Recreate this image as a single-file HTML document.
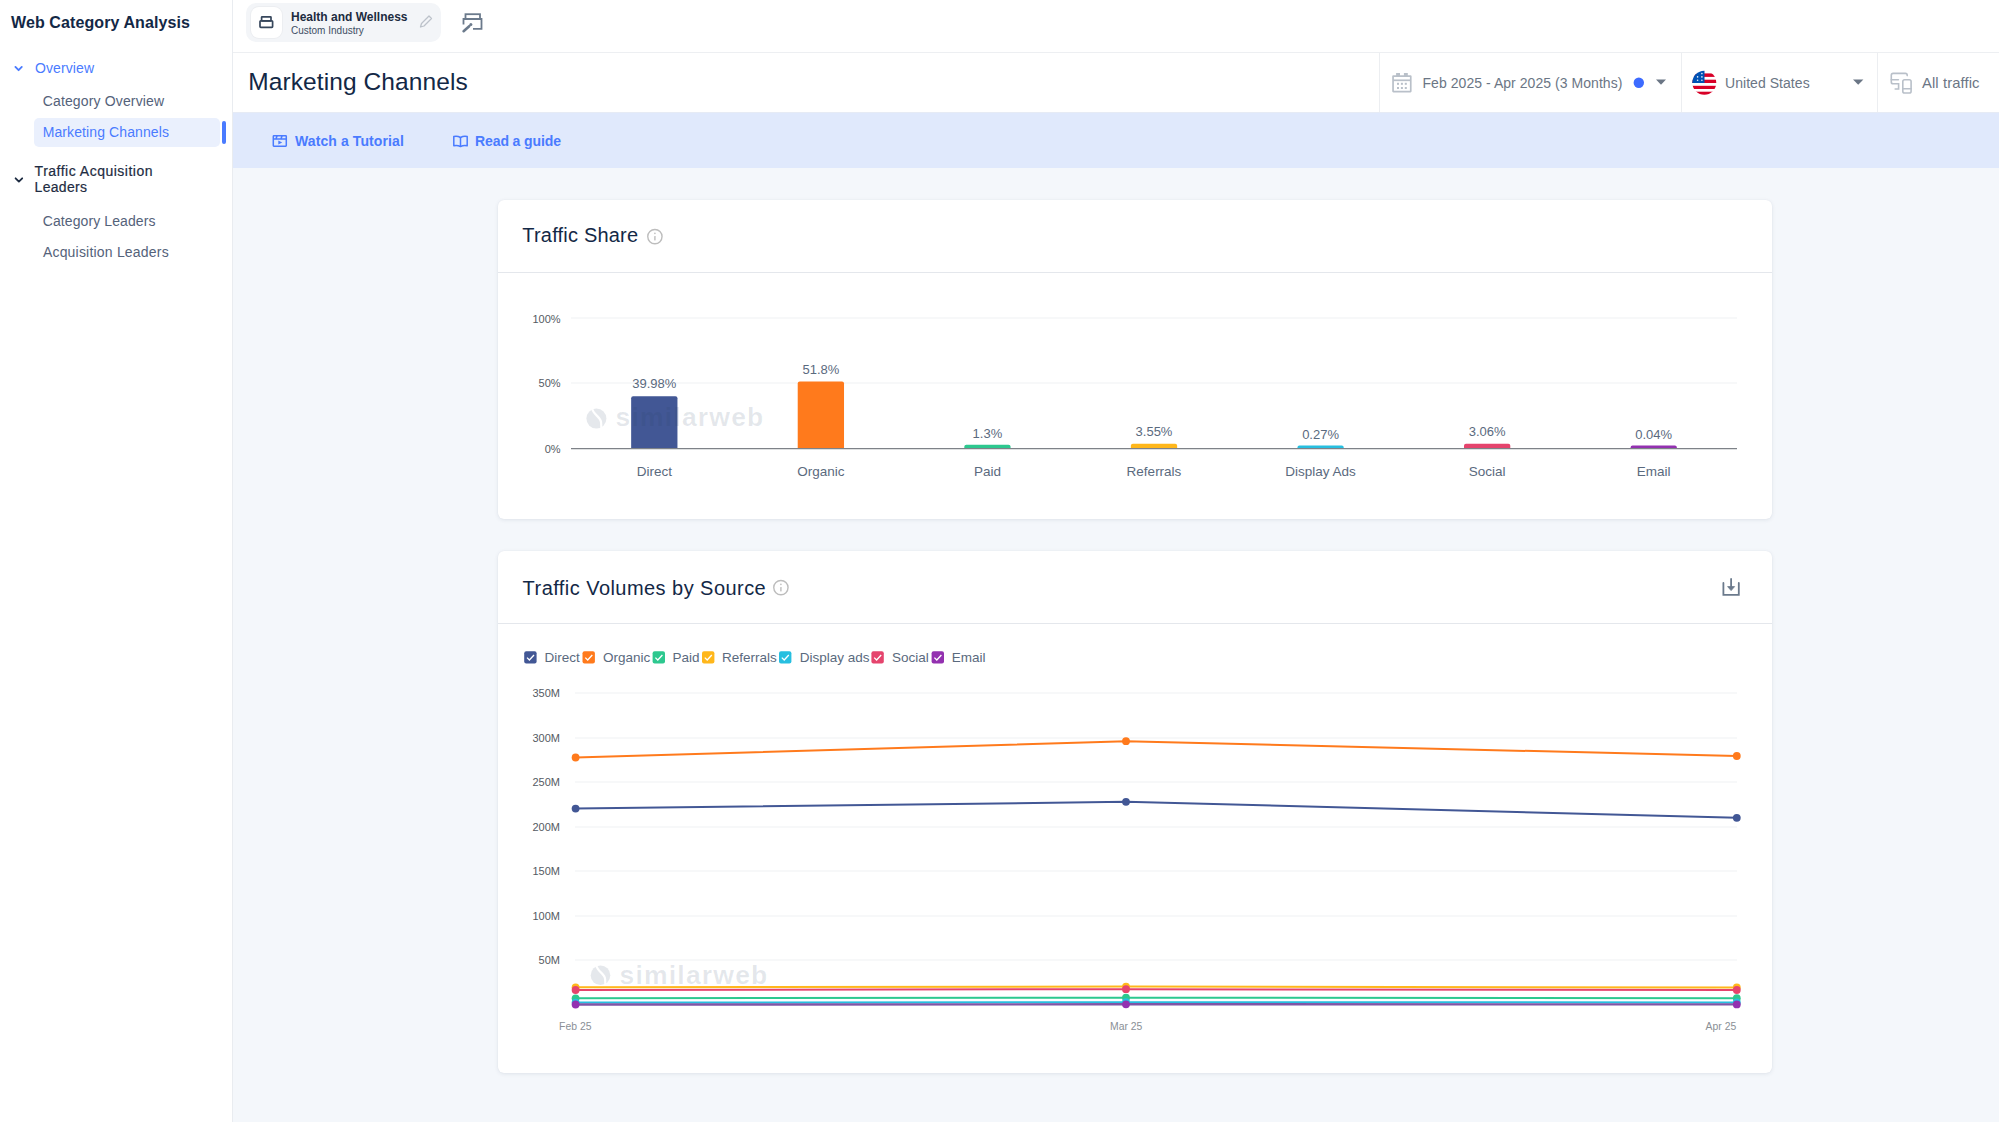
<!DOCTYPE html>
<html><head><meta charset="utf-8"><title>Marketing Channels</title>
<style>
html,body{margin:0;padding:0;width:1999px;height:1122px;overflow:hidden;background:#F4F7FB;}
body{position:relative;font-family:"Liberation Sans", sans-serif;}
.t{position:absolute;white-space:nowrap;}
svg{position:absolute;left:0;top:0;}
</style></head><body>
<div style="position:absolute;left:0px;top:0px;width:1999px;height:1122px;background:#F4F7FB;"></div>
<div style="position:absolute;left:0px;top:0px;width:232px;height:1122px;background:#FFFFFF;"></div>
<div style="position:absolute;left:232px;top:0px;width:1px;height:1122px;background:#E9ECF0;"></div>
<div style="position:absolute;left:233px;top:0px;width:1766px;height:52px;background:#FFFFFF;"></div>
<div style="position:absolute;left:233px;top:52px;width:1766px;height:1px;background:#EDEFF2;"></div>
<div style="position:absolute;left:233px;top:53px;width:1766px;height:59px;background:#FFFFFF;"></div>
<div style="position:absolute;left:233px;top:112px;width:1766px;height:56px;background:#E0E9FC;"></div>
<div style="position:absolute;left:233px;top:112px;width:1766px;height:1px;background:#E6EBF5;"></div>
<div class="t" style="left:11.00px;top:15.46px;font-size:16px;line-height:16px;color:#132846;font-weight:700;letter-spacing:0.1px;">Web Category Analysis</div>
<div class="t" style="left:35.00px;top:61.15px;font-size:14px;line-height:14px;color:#4A7BFF;font-weight:400;letter-spacing:0.1px;">Overview</div>
<div class="t" style="left:42.70px;top:93.95px;font-size:14px;line-height:14px;color:#54627A;font-weight:400;letter-spacing:0.15px;">Category Overview</div>
<div style="position:absolute;left:34px;top:118px;width:186px;height:29px;background:#EAF0FD;border-radius:5px;"></div>
<div style="position:absolute;left:222px;top:121px;width:4px;height:23px;background:#4A7BFF;border-radius:2px;"></div>
<div class="t" style="left:42.70px;top:125.15px;font-size:14px;line-height:14px;color:#4A7BFF;font-weight:400;letter-spacing:0.1px;">Marketing Channels</div>
<div class="t" style="left:34.60px;top:163.95px;font-size:14px;line-height:14px;color:#1E2C42;font-weight:400;letter-spacing:0.5px;-webkit-text-stroke:0.2px #1E2C42;">Traffic Acquisition</div>
<div class="t" style="left:34.60px;top:179.65px;font-size:14px;line-height:14px;color:#1E2C42;font-weight:400;letter-spacing:0.3px;-webkit-text-stroke:0.2px #1E2C42;">Leaders</div>
<div class="t" style="left:42.70px;top:213.55px;font-size:14px;line-height:14px;color:#54627A;font-weight:400;letter-spacing:0.1px;">Category Leaders</div>
<div class="t" style="left:42.90px;top:244.75px;font-size:14px;line-height:14px;color:#54627A;font-weight:400;letter-spacing:0.2px;">Acquisition Leaders</div>
<div style="position:absolute;left:246px;top:3px;width:195px;height:39px;background:#F3F5F8;border-radius:10px;"></div>
<div style="position:absolute;left:251px;top:7px;width:31px;height:31px;background:#FFFFFF;border-radius:8px;box-shadow:0 0 0 1px #ECEEF1;"></div>
<div class="t" style="left:291.00px;top:10.84px;font-size:12px;line-height:12px;color:#1C2B40;font-weight:700;">Health and Wellness</div>
<div class="t" style="left:291.00px;top:26.04px;font-size:10px;line-height:10px;color:#3D4D63;font-weight:400;">Custom Industry</div>
<div class="t" style="left:248.20px;top:69.76px;font-size:24.5px;line-height:24.5px;color:#132846;font-weight:400;letter-spacing:0.1px;">Marketing Channels</div>
<div style="position:absolute;left:1378.5px;top:53px;width:1.0px;height:59px;background:#ECEEF1;"></div>
<div style="position:absolute;left:1680.5px;top:53px;width:1.0px;height:59px;background:#ECEEF1;"></div>
<div style="position:absolute;left:1877px;top:53px;width:1px;height:59px;background:#ECEEF1;"></div>
<div class="t" style="left:1422.50px;top:76.25px;font-size:14px;line-height:14px;color:#6B7685;font-weight:400;letter-spacing:0.05px;">Feb 2025 - Apr 2025 (3 Months)</div>
<div class="t" style="left:1725.00px;top:76.25px;font-size:14px;line-height:14px;color:#6B7685;font-weight:400;letter-spacing:0.05px;">United States</div>
<div class="t" style="left:1922.00px;top:75.57px;font-size:14.8px;line-height:14.8px;color:#6B7685;font-weight:400;letter-spacing:0.1px;">All traffic</div>
<div class="t" style="left:295.00px;top:134.15px;font-size:14px;line-height:14px;color:#4A7BFF;font-weight:700;letter-spacing:0.1px;">Watch a Tutorial</div>
<div class="t" style="left:475.00px;top:134.15px;font-size:14px;line-height:14px;color:#4A7BFF;font-weight:700;letter-spacing:-0.1px;">Read a guide</div>
<div style="position:absolute;left:498px;top:200px;width:1274px;height:319px;background:#FFFFFF;border-radius:6px;box-shadow:0 1px 4px rgba(20,40,80,0.09), 0 0 1px rgba(20,40,80,0.08);"></div>
<div style="position:absolute;left:498px;top:551px;width:1274px;height:522px;background:#FFFFFF;border-radius:6px;box-shadow:0 1px 4px rgba(20,40,80,0.09), 0 0 1px rgba(20,40,80,0.08);"></div>
<div style="position:absolute;left:498px;top:272px;width:1274px;height:1px;background:#E4E7EC;"></div>
<div style="position:absolute;left:498px;top:623px;width:1274px;height:1px;background:#E4E7EC;"></div>
<div class="t" style="left:522.30px;top:225.07px;font-size:20px;line-height:20px;color:#132846;font-weight:400;letter-spacing:0.2px;">Traffic Share</div>
<div class="t" style="left:522.60px;top:577.97px;font-size:20px;line-height:20px;color:#132846;font-weight:400;letter-spacing:0.45px;">Traffic Volumes by Source</div>
<div style="position:absolute;left:571px;top:316.5px;width:1166px;height:2.0px;background:#F7F8F9;"></div>
<div style="position:absolute;left:571px;top:381.5px;width:1166px;height:2.0px;background:#F7F8F9;"></div>
<div class="t" style="right:1438.40px;top:313.59px;font-size:11px;line-height:11px;color:#555B63;font-weight:400;">100%</div>
<div class="t" style="right:1438.40px;top:378.39px;font-size:11px;line-height:11px;color:#555B63;font-weight:400;">50%</div>
<div class="t" style="right:1438.40px;top:443.89px;font-size:11px;line-height:11px;color:#555B63;font-weight:400;">0%</div>
<div class="t" style="left:354.30px;width:600px;text-align:center;top:377.40px;font-size:13px;line-height:13px;color:#5A6A7E;font-weight:400;">39.98%</div>
<div class="t" style="left:354.30px;width:600px;text-align:center;top:464.67px;font-size:13.5px;line-height:13.5px;color:#5A6A7E;font-weight:400;">Direct</div>
<div class="t" style="left:520.87px;width:600px;text-align:center;top:362.60px;font-size:13px;line-height:13px;color:#5A6A7E;font-weight:400;">51.8%</div>
<div class="t" style="left:520.87px;width:600px;text-align:center;top:464.67px;font-size:13.5px;line-height:13.5px;color:#5A6A7E;font-weight:400;">Organic</div>
<div class="t" style="left:687.44px;width:600px;text-align:center;top:426.80px;font-size:13px;line-height:13px;color:#5A6A7E;font-weight:400;">1.3%</div>
<div class="t" style="left:687.44px;width:600px;text-align:center;top:464.67px;font-size:13.5px;line-height:13.5px;color:#5A6A7E;font-weight:400;">Paid</div>
<div class="t" style="left:854.01px;width:600px;text-align:center;top:424.80px;font-size:13px;line-height:13px;color:#5A6A7E;font-weight:400;">3.55%</div>
<div class="t" style="left:854.01px;width:600px;text-align:center;top:464.67px;font-size:13.5px;line-height:13.5px;color:#5A6A7E;font-weight:400;">Referrals</div>
<div class="t" style="left:1020.58px;width:600px;text-align:center;top:427.50px;font-size:13px;line-height:13px;color:#5A6A7E;font-weight:400;">0.27%</div>
<div class="t" style="left:1020.58px;width:600px;text-align:center;top:464.67px;font-size:13.5px;line-height:13.5px;color:#5A6A7E;font-weight:400;">Display Ads</div>
<div class="t" style="left:1187.15px;width:600px;text-align:center;top:424.80px;font-size:13px;line-height:13px;color:#5A6A7E;font-weight:400;">3.06%</div>
<div class="t" style="left:1187.15px;width:600px;text-align:center;top:464.67px;font-size:13.5px;line-height:13.5px;color:#5A6A7E;font-weight:400;">Social</div>
<div class="t" style="left:1353.72px;width:600px;text-align:center;top:427.50px;font-size:13px;line-height:13px;color:#5A6A7E;font-weight:400;">0.04%</div>
<div class="t" style="left:1353.72px;width:600px;text-align:center;top:464.67px;font-size:13.5px;line-height:13.5px;color:#5A6A7E;font-weight:400;">Email</div>
<div class="t" style="left:544.50px;top:651.17px;font-size:13.5px;line-height:13.5px;color:#5A6A7E;font-weight:400;">Direct</div>
<div class="t" style="left:603.00px;top:651.17px;font-size:13.5px;line-height:13.5px;color:#5A6A7E;font-weight:400;">Organic</div>
<div class="t" style="left:672.50px;top:651.17px;font-size:13.5px;line-height:13.5px;color:#5A6A7E;font-weight:400;">Paid</div>
<div class="t" style="left:722.00px;top:651.17px;font-size:13.5px;line-height:13.5px;color:#5A6A7E;font-weight:400;">Referrals</div>
<div class="t" style="left:799.70px;top:651.17px;font-size:13.5px;line-height:13.5px;color:#5A6A7E;font-weight:400;">Display ads</div>
<div class="t" style="left:892.00px;top:651.17px;font-size:13.5px;line-height:13.5px;color:#5A6A7E;font-weight:400;">Social</div>
<div class="t" style="left:951.70px;top:651.17px;font-size:13.5px;line-height:13.5px;color:#5A6A7E;font-weight:400;">Email</div>
<div style="position:absolute;left:575px;top:692.4px;width:1162px;height:2.0px;background:#F7F8F9;"></div>
<div class="t" style="right:1439.00px;top:688.39px;font-size:11px;line-height:11px;color:#555B63;font-weight:400;">350M</div>
<div style="position:absolute;left:575px;top:736.87px;width:1162px;height:2.0px;background:#F7F8F9;"></div>
<div class="t" style="right:1439.00px;top:732.86px;font-size:11px;line-height:11px;color:#555B63;font-weight:400;">300M</div>
<div style="position:absolute;left:575px;top:781.3399999999999px;width:1162px;height:2.0px;background:#F7F8F9;"></div>
<div class="t" style="right:1439.00px;top:777.33px;font-size:11px;line-height:11px;color:#555B63;font-weight:400;">250M</div>
<div style="position:absolute;left:575px;top:825.81px;width:1162px;height:2.0px;background:#F7F8F9;"></div>
<div class="t" style="right:1439.00px;top:821.80px;font-size:11px;line-height:11px;color:#555B63;font-weight:400;">200M</div>
<div style="position:absolute;left:575px;top:870.28px;width:1162px;height:2.0px;background:#F7F8F9;"></div>
<div class="t" style="right:1439.00px;top:866.27px;font-size:11px;line-height:11px;color:#555B63;font-weight:400;">150M</div>
<div style="position:absolute;left:575px;top:914.75px;width:1162px;height:2.0px;background:#F7F8F9;"></div>
<div class="t" style="right:1439.00px;top:910.74px;font-size:11px;line-height:11px;color:#555B63;font-weight:400;">100M</div>
<div style="position:absolute;left:575px;top:959.22px;width:1162px;height:2.0px;background:#F7F8F9;"></div>
<div class="t" style="right:1439.00px;top:955.21px;font-size:11px;line-height:11px;color:#555B63;font-weight:400;">50M</div>
<div class="t" style="left:275.30px;width:600px;text-align:center;top:1021.80px;font-size:10.4px;line-height:10.4px;color:#8A8F96;font-weight:400;">Feb 25</div>
<div class="t" style="left:826.20px;width:600px;text-align:center;top:1021.90px;font-size:10.4px;line-height:10.4px;color:#8A8F96;font-weight:400;">Mar 25</div>
<div class="t" style="right:262.80px;top:1021.90px;font-size:10.4px;line-height:10.4px;color:#8A8F96;font-weight:400;">Apr 25</div>
<svg width="1999" height="1122" viewBox="0 0 1999 1122">
<polyline points="15.4,66.9 18.6,70.2 21.8,66.9" fill="none" stroke="#4A7BFF" stroke-width="1.8" stroke-linecap="round" stroke-linejoin="round"/>
<polyline points="15.6,178.3 18.9,181.6 22.2,178.3" fill="none" stroke="#1E2C42" stroke-width="1.8" stroke-linecap="round" stroke-linejoin="round"/>
<g fill="none" stroke="#37475C" stroke-width="1.7"><rect x="260" y="20.8" width="12.6" height="6.6" rx="0.8"/><rect x="261.6" y="16.8" width="9.4" height="4" rx="0.5"/></g>
<g transform="translate(419.5,14.5)"><path d="M1,12.5 L2,9 L9.5,1.5 L12,4 L4.5,11.5 Z" fill="none" stroke="#BCC2CA" stroke-width="1.3" stroke-linejoin="round"/></g>
<g fill="none" stroke="#6B7A8C" stroke-width="1.8"><rect x="465.5" y="14.2" width="14.5" height="4.8"/><path d="M463.5,24.5 V19 H481.5 V28.8 H473"/></g><path d="M463.6,31.2 L469.2,26.2" stroke="#6B7A8C" stroke-width="2.6" stroke-linecap="round"/><circle cx="470.9" cy="24.4" r="1.5" fill="#6B7A8C"/>
<g fill="none" stroke="#B9C0C9" stroke-width="1.7"><rect x="1393.05" y="76.05" width="17.7" height="15.6" rx="0.3"/><line x1="1393" y1="80.3" x2="1410.7" y2="80.3"/></g><g fill="#B9C0C9"><rect x="1396.1" y="73" width="3.9" height="3"/><rect x="1403.9" y="73" width="3.9" height="3"/><rect x="1397" y="82.8" width="2" height="2"/><rect x="1400.9" y="82.8" width="2" height="2"/><rect x="1404.8" y="82.8" width="2" height="2"/><rect x="1397" y="87" width="2" height="2"/><rect x="1400.9" y="87" width="2" height="2"/><rect x="1404.8" y="87" width="2" height="2"/></g>
<circle cx="1638.8" cy="82.8" r="5.2" fill="#3D6BFF"/>
<path d="M1656,79.6 L1666,79.6 L1661,84.8 Z" fill="#6B7685"/>
<defs><clipPath id="fc"><circle cx="1704.3" cy="82.85" r="12"/></clipPath></defs>
<g clip-path="url(#fc)"><rect x="1692" y="70" width="25" height="26" fill="#FFFFFF"/>
<rect x="1692" y="73.4" width="25" height="3.5" fill="#D80027"/><rect x="1692" y="79.7" width="25" height="3.3" fill="#D80027"/><rect x="1692" y="85.8" width="25" height="3.2" fill="#D80027"/><rect x="1692" y="91.7" width="25" height="4" fill="#D80027"/>
<rect x="1692" y="70" width="12.5" height="13" fill="#0052B4"/></g>
<g fill="#EEF3FA"><circle cx="1701.9" cy="73.6" r="0.8"/><circle cx="1697.6" cy="76.9" r="0.8"/><circle cx="1701.9" cy="76.9" r="0.8"/><circle cx="1697.6" cy="80.3" r="0.8"/><circle cx="1701.9" cy="80.3" r="0.8"/></g>
<path d="M1853,79.6 L1863.4,79.6 L1858.2,84.8 Z" fill="#6B7685"/>
<g fill="none" stroke="#B9C0C9" stroke-width="1.6" stroke-linecap="round"><path d="M1907.2,75.6 V75.2 Q1907.2,73.4 1905.4,73.4 H1893.1 Q1891.3,73.4 1891.3,75.2 V82 Q1891.3,83.8 1893.1,83.8 H1898.6 V89 H1895.2"/><path d="M1891.3,79.7 H1898.4"/><rect x="1902.8" y="79.8" width="8.3" height="13.2" rx="1.8"/><path d="M1902.8,88.8 H1911.1"/></g>
<g fill="none" stroke="#4A7BFF" stroke-width="1.5"><rect x="273.3" y="135.8" width="13" height="10.4" rx="0.6"/><line x1="273.3" y1="139" x2="286.3" y2="139"/><line x1="277" y1="135.8" x2="276" y2="139"/><line x1="282" y1="135.8" x2="281" y2="139"/></g><path d="M278.3,140.6 L282.2,142.6 L278.3,144.6 Z" fill="#4A7BFF"/>
<g fill="none" stroke="#4A7BFF" stroke-width="1.5" stroke-linejoin="round"><path d="M460.5,137.5 C458,136 455.5,136 453.8,136.5 V145.8 C455.5,145.3 458,145.3 460.5,146.5 C463,145.3 465.5,145.3 467.2,145.8 V136.5 C465.5,136 463,136 460.5,137.5 Z"/><line x1="460.5" y1="137.5" x2="460.5" y2="146.5"/></g>
<g><circle cx="654.9" cy="236.6" r="7.15" fill="none" stroke="#BDBDBD" stroke-width="1.4"/><rect x="654.20" y="236.00" width="1.4" height="4.4" rx="0.4" fill="#BDBDBD"/><circle cx="654.9" cy="233.40" r="0.8" fill="#BDBDBD"/></g>
<g><circle cx="780.9" cy="587.6" r="7.15" fill="none" stroke="#BDBDBD" stroke-width="1.4"/><rect x="780.20" y="587.00" width="1.4" height="4.4" rx="0.4" fill="#BDBDBD"/><circle cx="780.9" cy="584.40" r="0.8" fill="#BDBDBD"/></g>
<g fill="none" stroke="#6B7A8C" stroke-width="1.8" stroke-linecap="round"><path d="M1723.4,583 V594.9 H1738.8 V583"/><path d="M1731.1,579 V588"/></g><path d="M1727.6,586.6 L1734.6,586.6 L1731.1,590.6 Z" fill="#6B7A8C" stroke="#6B7A8C" stroke-width="0.8" stroke-linejoin="round"/>
<line x1="571" y1="448.6" x2="1737" y2="448.6" stroke="#7E8288" stroke-width="1.3"/>
<path d="M631.15,448 V398.20 Q631.15,396.20 633.15,396.20 H675.45 Q677.45,396.20 677.45,398.20 V448 Z" fill="#425795"/>
<path d="M797.72,448 V383.40 Q797.72,381.40 799.72,381.40 H842.02 Q844.02,381.40 844.02,383.40 V448 Z" fill="#FF7A1C"/>
<path d="M964.29,448 V446.80 Q964.29,444.80 966.29,444.80 H1008.59 Q1010.59,444.80 1010.59,446.80 V448 Z" fill="#2DC88F"/>
<path d="M1130.86,448 V445.70 Q1130.86,443.70 1132.86,443.70 H1175.16 Q1177.16,443.70 1177.16,445.70 V448 Z" fill="#FFB71B"/>
<path d="M1297.43,448 V447.40 Q1297.43,445.40 1299.43,445.40 H1341.73 Q1343.73,445.40 1343.73,447.40 V448 Z" fill="#27BFE0"/>
<path d="M1464.00,448 V445.70 Q1464.00,443.70 1466.00,443.70 H1508.30 Q1510.30,443.70 1510.30,445.70 V448 Z" fill="#E5446D"/>
<path d="M1630.57,448 V447.40 Q1630.57,445.40 1632.57,445.40 H1674.87 Q1676.87,445.40 1676.87,447.40 V448 Z" fill="#9331B0"/>
<rect x="524.2" y="651.2" width="12.4" height="12.4" rx="2" fill="#425795"/><polyline points="527.0,657.6 529.4,660 534.0,655" fill="none" stroke="#FFFFFF" stroke-width="1.3"/>
<rect x="582.5" y="651.2" width="12.4" height="12.4" rx="2" fill="#FF7A1C"/><polyline points="585.3,657.6 587.7,660 592.3,655" fill="none" stroke="#FFFFFF" stroke-width="1.3"/>
<rect x="652.6" y="651.2" width="12.4" height="12.4" rx="2" fill="#2DC88F"/><polyline points="655.4,657.6 657.8,660 662.4,655" fill="none" stroke="#FFFFFF" stroke-width="1.3"/>
<rect x="702.0" y="651.2" width="12.4" height="12.4" rx="2" fill="#FFB71B"/><polyline points="704.8,657.6 707.2,660 711.8,655" fill="none" stroke="#FFFFFF" stroke-width="1.3"/>
<rect x="779.0" y="651.2" width="12.4" height="12.4" rx="2" fill="#27BFE0"/><polyline points="781.8,657.6 784.2,660 788.8,655" fill="none" stroke="#FFFFFF" stroke-width="1.3"/>
<rect x="871.4" y="651.2" width="12.4" height="12.4" rx="2" fill="#E5446D"/><polyline points="874.2,657.6 876.6,660 881.2,655" fill="none" stroke="#FFFFFF" stroke-width="1.3"/>
<rect x="931.6" y="651.2" width="12.4" height="12.4" rx="2" fill="#9331B0"/><polyline points="934.4,657.6 936.8,660 941.4,655" fill="none" stroke="#FFFFFF" stroke-width="1.3"/>
<polyline points="575.6,808.6 1126,801.8 1736.8,817.8" fill="none" stroke="#425795" stroke-width="2"/>
<circle cx="575.6" cy="808.6" r="3.9" fill="#425795"/>
<circle cx="1126" cy="801.8" r="3.9" fill="#425795"/>
<circle cx="1736.8" cy="817.8" r="3.9" fill="#425795"/>
<polyline points="575.6,757.5 1126,741.2 1736.8,756" fill="none" stroke="#FF7A1C" stroke-width="2"/>
<circle cx="575.6" cy="757.5" r="3.9" fill="#FF7A1C"/>
<circle cx="1126" cy="741.2" r="3.9" fill="#FF7A1C"/>
<circle cx="1736.8" cy="756" r="3.9" fill="#FF7A1C"/>
<polyline points="575.6,998.3 1126,997.7 1736.8,998.2" fill="none" stroke="#2DC88F" stroke-width="2"/>
<circle cx="575.6" cy="998.3" r="3.9" fill="#2DC88F"/>
<circle cx="1126" cy="997.7" r="3.9" fill="#2DC88F"/>
<circle cx="1736.8" cy="998.2" r="3.9" fill="#2DC88F"/>
<polyline points="575.6,987.3 1126,986.6 1736.8,987.5" fill="none" stroke="#FFB71B" stroke-width="2"/>
<circle cx="575.6" cy="987.3" r="3.9" fill="#FFB71B"/>
<circle cx="1126" cy="986.6" r="3.9" fill="#FFB71B"/>
<circle cx="1736.8" cy="987.5" r="3.9" fill="#FFB71B"/>
<polyline points="575.6,1002.6 1126,1002.2 1736.8,1002.4" fill="none" stroke="#27BFE0" stroke-width="2"/>
<circle cx="575.6" cy="1002.6" r="3.9" fill="#27BFE0"/>
<circle cx="1126" cy="1002.2" r="3.9" fill="#27BFE0"/>
<circle cx="1736.8" cy="1002.4" r="3.9" fill="#27BFE0"/>
<polyline points="575.6,990 1126,989.2 1736.8,990" fill="none" stroke="#E5446D" stroke-width="2"/>
<circle cx="575.6" cy="990" r="3.9" fill="#E5446D"/>
<circle cx="1126" cy="989.2" r="3.9" fill="#E5446D"/>
<circle cx="1736.8" cy="990" r="3.9" fill="#E5446D"/>
<polyline points="575.6,1004.5 1126,1004.3 1736.8,1004.4" fill="none" stroke="#8055A6" stroke-width="2.4"/>
<circle cx="575.6" cy="1004.5" r="3.9" fill="#9331B0"/>
<circle cx="1126" cy="1004.3" r="3.9" fill="#9331B0"/>
<circle cx="1736.8" cy="1004.4" r="3.9" fill="#9331B0"/>
<g><defs><mask id="m596418"><rect x="584.4" y="406.6" width="24" height="24" fill="#fff"/><path d="M592.00,407.60 C592.80,415.10 601.00,416.60 601.10,422.60 L601.40,429.60" fill="none" stroke="#000" stroke-width="2.20"/></mask></defs><circle cx="596.4" cy="418.6" r="10" fill="rgba(40,65,100,0.12)" mask="url(#m596418)"/></g>
<text x="615.5" y="426.4" font-family="Liberation Sans" font-size="26.5" font-weight="700" letter-spacing="1.2" fill="rgba(40,65,100,0.12)">similarweb</text>
<g><defs><mask id="m600975"><rect x="588.7" y="963.5" width="23.6" height="23.6" fill="#fff"/><path d="M596.19,964.52 C596.97,971.87 605.01,973.34 605.11,979.22 L605.40,986.08" fill="none" stroke="#000" stroke-width="2.16"/></mask></defs><circle cx="600.5" cy="975.3" r="9.8" fill="rgba(40,65,100,0.12)" mask="url(#m600975)"/></g>
<text x="619.5" y="983.5" font-family="Liberation Sans" font-size="26.5" font-weight="700" letter-spacing="1.2" fill="rgba(40,65,100,0.12)">similarweb</text>
</svg>
</body></html>
